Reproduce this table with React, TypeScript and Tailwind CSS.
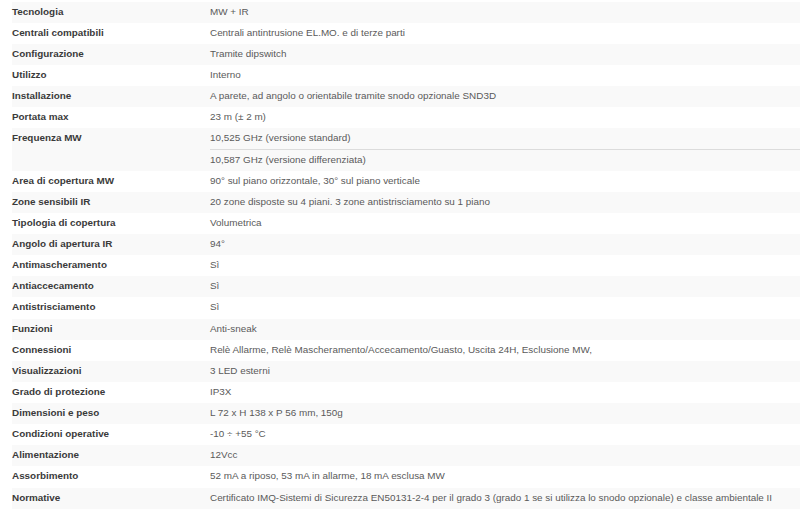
import React from 'react';

type Spec = { label: string; values: string[] };

const specs: Spec[] = [
  { label: 'Tecnologia', values: ['MW + IR'] },
  { label: 'Centrali compatibili', values: ['Centrali antintrusione EL.MO. e di terze parti'] },
  { label: 'Configurazione', values: ['Tramite dipswitch'] },
  { label: 'Utilizzo', values: ['Interno'] },
  { label: 'Installazione', values: ['A parete, ad angolo o orientabile tramite snodo opzionale SND3D'] },
  { label: 'Portata max', values: ['23 m (± 2 m)'] },
  { label: 'Frequenza MW', values: ['10,525 GHz (versione standard)', '10,587 GHz (versione differenziata)'] },
  { label: 'Area di copertura MW', values: ['90° sul piano orizzontale, 30° sul piano verticale'] },
  { label: 'Zone sensibili IR', values: ['20 zone disposte su 4 piani. 3 zone antistrisciamento su 1 piano'] },
  { label: 'Tipologia di copertura', values: ['Volumetrica'] },
  { label: 'Angolo di apertura IR', values: ['94°'] },
  { label: 'Antimascheramento', values: ['Sì'] },
  { label: 'Antiaccecamento', values: ['Sì'] },
  { label: 'Antistrisciamento', values: ['Sì'] },
  { label: 'Funzioni', values: ['Anti-sneak'] },
  { label: 'Connessioni', values: ['Relè Allarme, Relè Mascheramento/Accecamento/Guasto, Uscita 24H, Esclusione MW,'] },
  { label: 'Visualizzazioni', values: ['3 LED esterni'] },
  { label: 'Grado di protezione', values: ['IP3X'] },
  { label: 'Dimensioni e peso', values: ['L 72 x H 138 x P 56 mm, 150g'] },
  { label: 'Condizioni operative', values: ['-10 ÷ +55 °C'] },
  { label: 'Alimentazione', values: ['12Vcc'] },
  { label: 'Assorbimento', values: ['52 mA a riposo, 53 mA in allarme, 18 mA esclusa MW'] },
  {
    label: 'Normative',
    values: [
      'Certificato IMQ-Sistemi di Sicurezza EN50131-2-4 per il grado 3 (grado 1 se si utilizza lo snodo opzionale) e classe ambientale II',
    ],
  },
];

export default function App() {
  return (
    <div className="w-[800px] h-[525px] bg-white pt-[1.7px] pl-[12px] font-['Liberation_Sans',Arial,sans-serif] text-[9.9px] leading-[12px]">
      <table className="w-full border-collapse">
        <tbody>
          {specs.map((spec, i) =>
            spec.values.map((value, j) => (
              <tr key={`${i}-${j}`} className={i % 2 === 0 ? 'bg-[#f9f9f9]' : 'bg-white'}>
                {j === 0 && (
                  <td
                    rowSpan={spec.values.length}
                    className="w-[198px] p-0 pt-[4px] align-top font-bold text-[#3a3a3a]"
                  >
                    {spec.label}
                  </td>
                )}
                <td
                  className={
                    j > 0
                      ? 'h-[21.14px] p-0 pt-[4px] align-top text-[#5a5a5a] border-t border-[#dcdcdc]'
                      : 'h-[21.14px] p-0 pt-[4px] align-top text-[#5a5a5a]'
                  }
                >
                  {value}
                </td>
              </tr>
            ))
          )}
        </tbody>
      </table>
    </div>
  );
}
